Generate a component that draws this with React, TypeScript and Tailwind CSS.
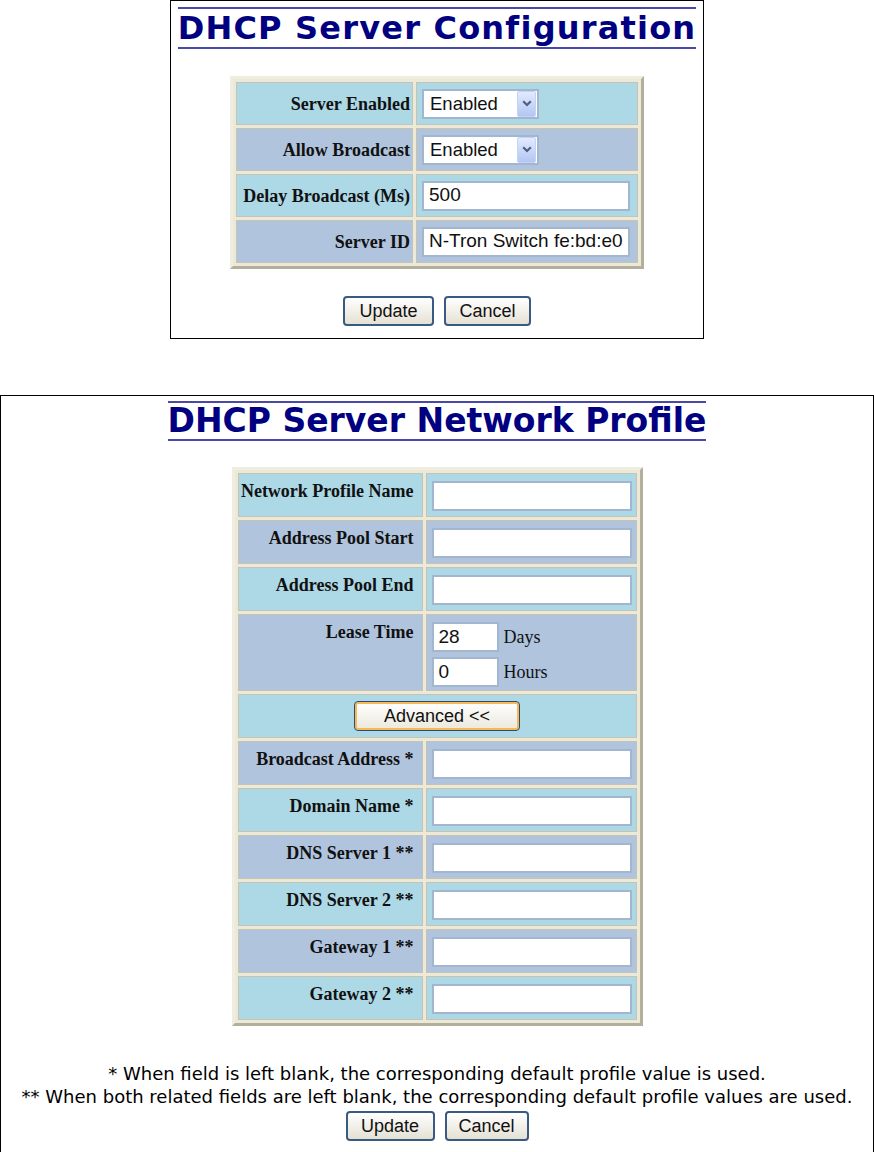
import React from "react";

const serif = "font-['Liberation_Serif','Times_New_Roman',serif]";
const sans = "font-['Liberation_Sans',Arial,sans-serif]";

type RowProps = {
  label: string;
  shade: "blue" | "steel";
  top?: boolean;
  children: React.ReactNode;
  labelWidth: string;
  valueWidth: string;
  height?: string;
};

function FormRow(props: RowProps) {
  const bg = props.shade === "blue" ? "bg-[#add8e6]" : "bg-[#b0c4de]";
  const align = props.top ? "align-top pt-[7px]" : "align-middle";
  const pad = props.top ? "pr-[8px]" : "pr-[2px]";
  return (
    <tr className={props.height || "h-[43px]"}>
      <td
        className={`${bg} ${align} ${pad} ${props.labelWidth} border border-[#c7c3b3] text-right text-[18px] leading-[20px] font-bold text-[#111] ${serif}`}
      >
        {props.label}
      </td>
      <td className={`${bg} ${align} ${props.valueWidth} border border-[#c7c3b3] pl-[5px]`}>
        {props.children}
      </td>
    </tr>
  );
}

function TextBox({ value, width }: { value?: string; width: string }) {
  return (
    <div
      className={`flex h-[30px] ${width} items-center border-2 border-[#a3b6cf] bg-white px-[5px] text-[19px] text-[#111] ${sans}`}
    >
      {value}
    </div>
  );
}

function SelectBox() {
  return (
    <div className={`flex h-[30px] w-[117px] items-center border-2 border-[#a3b6cf] bg-white pl-[6px] pr-[1px] ${sans}`}>
      <span className="flex-1 text-[18.5px] text-[#111]">Enabled</span>
      <span className="flex h-[26px] w-[19px] items-center justify-center rounded-[2px] border border-[#c3d3f6] bg-linear-to-b from-[#e2eafd] to-[#b3c6f3]">
        <svg width="10" height="7" viewBox="0 0 10 7">
          <path d="M1.2 1.2 L5 5 L8.8 1.2" stroke="#4d6185" strokeWidth="2.2" fill="none" />
        </svg>
      </span>
    </div>
  );
}

function XpButton({ text, width, height }: { text: string; width: string; height: string }) {
  return (
    <div
      className={`flex ${width} ${height} items-center justify-center rounded-[4px] border-2 border-[#3b5a82] bg-linear-to-b from-white to-[#e4e1d4] text-[18px] text-[#111] ${sans}`}
    >
      {text}
    </div>
  );
}

function Title({ text, size }: { text: string; size: string }) {
  return (
    <h1
      className={`inline-block border-y-2 border-[#4a4aa6] ${size} font-bold text-[#000080] font-['DejaVu_Sans',Verdana,sans-serif]`}
    >
      {text}
    </h1>
  );
}

const tableCls =
  "border-separate border-spacing-[3px] border-[3px] border-t-[#efece0] border-l-[#efece0] border-r-[#b3af9d] border-b-[#b3af9d] bg-[#ece9d8]";

export default function App() {
  const rows2: [string, "blue" | "steel"][] = [
    ["Broadcast Address *", "steel"],
    ["Domain Name *", "blue"],
    ["DNS Server 1 **", "steel"],
    ["DNS Server 2 **", "blue"],
    ["Gateway 1 **", "steel"],
    ["Gateway 2 **", "blue"],
  ];
  const lw2 = "w-[185px]";
  const vw2 = "w-[211px]";

  return (
    <div className="h-[1152px] w-[874px] bg-white">
      {/* top panel */}
      <div className="ml-[170px] flex h-[339px] w-[534px] flex-col items-center border border-black pt-[6px]">
        <Title text="DHCP Server Configuration" size="text-[32px] leading-[38px] tracking-[1.2px]" />
        <table className={`mt-[27px] ${tableCls}`}>
          <tbody>
            <FormRow label="Server Enabled" shade="blue" labelWidth="w-[177px]" valueWidth="w-[222px]">
              <SelectBox />
            </FormRow>
            <FormRow label="Allow Broadcast" shade="steel" labelWidth="w-[177px]" valueWidth="w-[222px]">
              <SelectBox />
            </FormRow>
            <FormRow label="Delay Broadcast (Ms)" shade="blue" labelWidth="w-[177px]" valueWidth="w-[222px]">
              <TextBox value="500" width="w-[208px]" />
            </FormRow>
            <FormRow label="Server ID" shade="steel" labelWidth="w-[177px]" valueWidth="w-[222px]">
              <TextBox value="N-Tron Switch fe:bd:e0" width="w-[208px]" />
            </FormRow>
          </tbody>
        </table>
        <div className="mt-[27px] flex gap-[10px]">
          <XpButton text="Update" width="w-[91px]" height="h-[30px]" />
          <XpButton text="Cancel" width="w-[87px]" height="h-[30px]" />
        </div>
      </div>

      {/* bottom panel */}
      <div className="mt-[56px] flex h-[758px] w-[874px] flex-col items-center border border-black pt-[5px]">
        <Title text="DHCP Server Network Profile" size="text-[33px] leading-[36px]" />
        <table className={`mt-[26px] ${tableCls}`}>
          <tbody>
            <FormRow label="Network Profile Name" shade="blue" top height="h-[44px]" labelWidth={lw2} valueWidth={vw2}>
              <TextBox width="w-[200px]" />
            </FormRow>
            <FormRow label="Address Pool Start" shade="steel" top height="h-[44px]" labelWidth={lw2} valueWidth={vw2}>
              <TextBox width="w-[200px]" />
            </FormRow>
            <FormRow label="Address Pool End" shade="blue" top height="h-[44px]" labelWidth={lw2} valueWidth={vw2}>
              <TextBox width="w-[200px]" />
            </FormRow>
            <FormRow label="Lease Time" shade="steel" top height="h-[77px]" labelWidth={lw2} valueWidth={vw2}>
              <div className="flex flex-col gap-[5px]">
                <div className="flex items-baseline gap-[5px]">
                  <TextBox value="28" width="w-[67px]" />
                  <span className={`text-[18px] text-[#111] ${serif}`}>Days</span>
                </div>
                <div className="flex items-baseline gap-[5px]">
                  <TextBox value="0" width="w-[67px]" />
                  <span className={`text-[18px] text-[#111] ${serif}`}>Hours</span>
                </div>
              </div>
            </FormRow>
            <tr className="h-[44px]">
              <td colSpan={2} className="border border-[#c7c3b3] bg-[#add8e6] text-center align-middle">
                <div
                  className={`mx-auto flex h-[30px] w-[166px] items-center justify-center rounded-[4px] border border-[#2c4a72] bg-linear-to-b from-white to-[#ebe8dc] text-[18px] text-[#111] shadow-[inset_0_0_0_2px_#f7b955] ${sans}`}
                >
                  Advanced &lt;&lt;
                </div>
              </td>
            </tr>
            {rows2.map(([label, shade]) => (
              <FormRow key={label} label={label} shade={shade} top height="h-[44px]" labelWidth={lw2} valueWidth={vw2}>
                <TextBox width="w-[200px]" />
              </FormRow>
            ))}
          </tbody>
        </table>
        <div className="mt-[36px] text-center text-[18px] leading-[23px] text-black font-['DejaVu_Sans',Verdana,sans-serif]">
          <p>* When field is left blank, the corresponding default profile value is used.</p>
          <p>** When both related fields are left blank, the corresponding default profile values are used.</p>
        </div>
        <div className="mt-[3px] flex gap-[10px]">
          <XpButton text="Update" width="w-[89px]" height="h-[30px]" />
          <XpButton text="Cancel" width="w-[84px]" height="h-[30px]" />
        </div>
      </div>
    </div>
  );
}
